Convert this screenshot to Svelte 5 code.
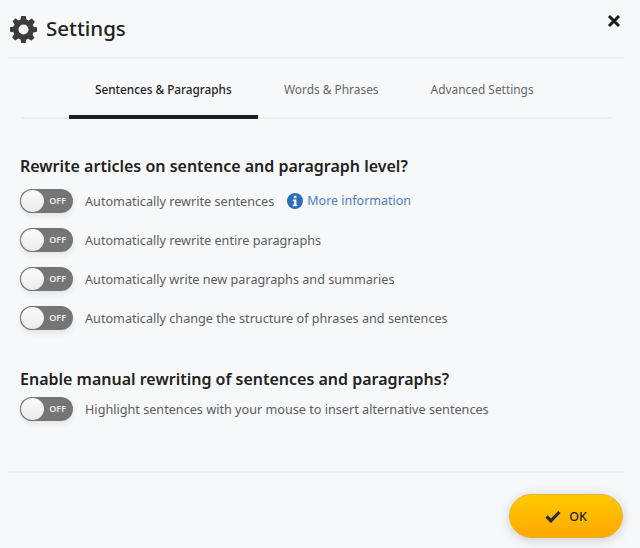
<script>
	const tabs = ['Sentences & Paragraphs', 'Words & Phrases', 'Advanced Settings'];
	const sentenceOptions = [
		{ label: 'Automatically rewrite sentences', more: true },
		{ label: 'Automatically rewrite entire paragraphs' },
		{ label: 'Automatically write new paragraphs and summaries' },
		{ label: 'Automatically change the structure of phrases and sentences' }
	];
</script>

{#snippet toggle()}
	<span class="toggle">
		<span class="off">OFF</span>
		<span class="knob"></span>
	</span>
{/snippet}

<div class="dialog">
	<header class="head">
		<svg class="gear" viewBox="0 0 24 24" aria-hidden="true">
			<path
				fill-rule="evenodd"
				d="M10 0h4l.6 3.2 2 .8L19.300 2.200l2.800 2.800-1.800 2.700.8 2L24 10v4l-3.200.6-.8 2 1.800 2.700-2.800 2.800-2.700-1.800-2 .8L14 24h-4l-.6-3.200-2-.8-2.700 1.800-2.800-2.800 1.800-2.700-.8-2L0 14v-4l3.200-.6.8-2L2.200 4.700l2.800-2.800L7.400 4l2-.8zM12 7.500a4.500 4.500 0 1 0 0 9 4.500 4.500 0 0 0 0-9z"
			/>
		</svg>
		<h1>Settings</h1>
		<button class="close" aria-label="Close">
			<svg viewBox="0 0 14 14"><path d="M2 2l10 10M12 2L2 12" /></svg>
		</button>
	</header>

	<nav class="tabs">
		{#each tabs as tab, i}
			<span class="tab" class:active={i === 0}>{tab}</span>
		{/each}
	</nav>

	<section class="body">
		<h2>Rewrite articles on sentence and paragraph level?</h2>
		{#each sentenceOptions as option}
			<div class="row">
				{@render toggle()}
				<span class="label">{option.label}</span>
				{#if option.more}
					<a class="more" href="#more">
						<svg viewBox="0 0 16 16" aria-hidden="true">
							<circle cx="8" cy="8" r="8" fill="#2a6ebb" />
							<rect x="6.800" y="2.800" width="2.600" height="2.500" fill="#f7f8f9" />
							<path d="M5.800 6.500h3.600v5.200h1v1.500H5.800v-1.500h1V8H5.800z" fill="#f7f8f9" />
						</svg>
						More information
					</a>
				{/if}
			</div>
		{/each}

		<h2 class="second">Enable manual rewriting of sentences and paragraphs?</h2>
		<div class="row">
			{@render toggle()}
			<span class="label">Highlight sentences with your mouse to insert alternative sentences</span>
		</div>
	</section>

	<footer class="foot">
		<button class="ok">
			<svg viewBox="0 0 16 13" aria-hidden="true"><path d="M1.500 6.500l4.500 4.200L14.500 2" /></svg>
			OK
		</button>
	</footer>
</div>

<style>
	:global(body) {
		margin: 0;
		background: #f7f8f9;
	}

	.dialog {
		width: 640px;
		height: 548px;
		overflow: hidden;
		background: #f7f8f9;
		font-family: 'Noto Sans', sans-serif;
		color: #5c5c5c;
	}

	.head {
		display: flex;
		align-items: center;
		height: 57px;
		margin: 0 16px 0 8px;
		padding: 0 3px 0 2px;
		border-bottom: 2px solid #efefef;
	}

	.gear {
		width: 27px;
		height: 27px;
		margin-top: 1px;
		fill: #3c3c3c;
	}

	h1 {
		margin: -2px 0 0 9px;
		font-size: 20.500px;
		font-weight: 500;
		color: #222;
	}

	.close {
		margin: -15px 0 0 auto;
		padding: 0;
		width: 14px;
		height: 14px;
		border: none;
		background: none;
	}

	.close svg {
		display: block;
		fill: none;
		stroke: #1c1c1c;
		stroke-width: 3;
	}

	.tabs {
		display: flex;
		height: 58px;
		margin: 0 28px 0 22px;
		padding-left: 47px;
		border-bottom: 2px solid #efefef;
	}

	.tab {
		box-sizing: border-box;
		height: 60px;
		padding: 22px 26px 0 26px;
		font-size: 11.900px;
		color: #666;
		white-space: nowrap;
	}

	.tab.active {
		width: 189px;
		font-size: 11.750px;
		font-weight: 500;
		color: #222;
		border-bottom: 4px solid #1b1b22;
	}

	.body {
		height: 354px;
		box-sizing: border-box;
		margin: 0 16px 0 8px;
		padding: 36px 0 0 12px;
		border-bottom: 2px solid #efefef;
	}

	h2 {
		margin: 0 0 4px;
		font-size: 16px;
		line-height: 22px;
		font-weight: 600;
		color: #222;
	}

	h2.second {
		margin: 31px 0 -1px;
	}

	.row {
		display: flex;
		align-items: center;
		height: 39px;
		font-size: 12.650px;
	}

	.toggle {
		position: relative;
		flex: none;
		width: 53px;
		height: 24px;
		border-radius: 12px;
		background: #757575;
		box-shadow: 0 3px 6px rgba(0, 0, 0, 0.08);
	}

	.knob {
		position: absolute;
		top: 0;
		left: 0;
		width: 25px;
		height: 24px;
		box-sizing: border-box;
		border: 1px solid #777;
		border-radius: 50%;
		background: linear-gradient(#fafafa, #ececec);
	}

	.off {
		position: absolute;
		top: 5px;
		right: 7px;
		font-size: 9px;
		line-height: 14px;
		font-weight: 600;
		color: #eee;
	}

	.label {
		margin-left: 12px;
		white-space: nowrap;
	}

	.more {
		display: flex;
		align-items: center;
		margin-left: 13px;
		font-size: 12.500px;
		color: #4a7fc1;
		text-decoration: none;
		white-space: nowrap;
	}

	.more svg {
		width: 16px;
		height: 16px;
		margin-right: 4px;
	}

	.foot {
		display: flex;
		justify-content: flex-end;
		padding: 21px 17px 0 0;
	}

	.ok {
		display: flex;
		align-items: center;
		justify-content: center;
		gap: 8px;
		width: 114px;
		height: 44px;
		padding: 0;
		border: 1px solid #e8b030;
		border-radius: 22px;
		background: linear-gradient(#ffca00, #ffa800);
		box-shadow: 0 2px 12px rgba(0, 0, 0, 0.18);
		font: 500 12.500px 'Noto Sans', sans-serif;
		color: #222;
	}

	.ok svg {
		width: 16px;
		height: 13px;
		fill: none;
		stroke: #2a2a2a;
		stroke-width: 3.200;
	}
</style>
